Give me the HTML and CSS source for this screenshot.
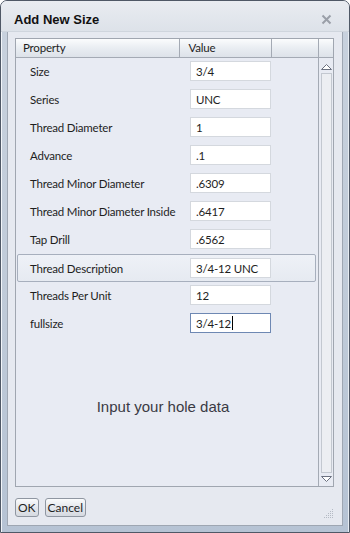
FILE: index.html
```html
<!DOCTYPE html>
<html lang="en">
<head>
    <meta charset="UTF-8">
    <meta name="viewport" content="width=device-width, initial-scale=1.0">
    <title>Add New Size</title>
    <link rel="stylesheet" href="styles.css">
</head>
<body>
    <div class="window">
        <div class="titlebar">
            <span class="title">Add New Size</span>
            <svg class="close" width="11" height="11" viewBox="0 0 11 11">
                <path d="M1.5 1.5 L9.5 9.5 M9.5 1.5 L1.5 9.5" stroke="#9a9fa8" stroke-width="2" fill="none"/>
            </svg>
        </div>

        <div class="content">
            <div class="grid">
                <div class="grid-head">
                    <div class="head-cell col-prop">Property</div>
                    <div class="head-cell col-value">Value</div>
                    <div class="head-cell col-extra"></div>
                    <div class="head-cell col-scroll"></div>
                </div>

                <div class="grid-main">
                    <div class="rows">
                        <div class="row"><span class="label">Size</span><input class="field" type="text" value="3/4"></div>
                        <div class="row"><span class="label">Series</span><input class="field" type="text" value="UNC"></div>
                        <div class="row"><span class="label">Thread Diameter</span><input class="field" type="text" value="1"></div>
                        <div class="row"><span class="label">Advance</span><input class="field" type="text" value=".1"></div>
                        <div class="row"><span class="label">Thread Minor Diameter</span><input class="field" type="text" value=".6309"></div>
                        <div class="row"><span class="label">Thread Minor Diameter Inside</span><input class="field" type="text" value=".6417"></div>
                        <div class="row"><span class="label">Tap Drill</span><input class="field" type="text" value=".6562"></div>
                        <div class="row selected"><span class="label">Thread Description</span><input class="field" type="text" value="3/4-12 UNC"></div>
                        <div class="row"><span class="label">Threads Per Unit</span><input class="field" type="text" value="12"></div>
                        <div class="row"><span class="label">fullsize</span><span class="field focused">3/4-12<span class="caret"></span></span></div>

                        <div class="hint">Input your hole data</div>
                    </div>

                    <div class="scrollbar">
                        <svg class="arrow" width="11" height="6" viewBox="0 0 11 6">
                            <path d="M0.5 5.5 L5.5 0.5 L10.5 5.5 Z" fill="#fff" stroke="#6b7180"/>
                        </svg>
                        <div class="track"></div>
                        <svg class="arrow" width="11" height="6" viewBox="0 0 11 6">
                            <path d="M0.5 0.5 L5.5 5.5 L10.5 0.5 Z" fill="#fff" stroke="#6b7180"/>
                        </svg>
                    </div>
                </div>
            </div>

            <div class="footer">
                <button class="btn">OK</button>
                <button class="btn">Cancel</button>
                <svg class="grip" width="10" height="10" viewBox="0 0 10 10">
                    <g fill="#b4bac4">
                        <rect x="8" y="0" width="1" height="1"/>
                        <rect x="6" y="2" width="1" height="1"/><rect x="8" y="2" width="1" height="1"/>
                        <rect x="4" y="4" width="1" height="1"/><rect x="6" y="4" width="1" height="1"/><rect x="8" y="4" width="1" height="1"/>
                        <rect x="2" y="6" width="1" height="1"/><rect x="4" y="6" width="1" height="1"/><rect x="6" y="6" width="1" height="1"/><rect x="8" y="6" width="1" height="1"/>
                        <rect x="0" y="8" width="1" height="1"/><rect x="2" y="8" width="1" height="1"/><rect x="4" y="8" width="1" height="1"/><rect x="6" y="8" width="1" height="1"/><rect x="8" y="8" width="1" height="1"/>
                    </g>
                </svg>
            </div>
        </div>
    </div>
</body>
</html>
```

FILE: styles.css
```css
html, body {
    margin: 0;
    padding: 0;
    background: #ffffff;
}
body {
    font-family: Lato, "Liberation Sans", Arial, sans-serif;
    font-size: 11.5px;
    letter-spacing: -0.2px;
    color: #1e1e1e;
}
.window {
    width: 350px;
    height: 533px;
    box-sizing: border-box;
    border: 1px solid #4f5866;
    border-radius: 7px 7px 0 0;
    background: linear-gradient(#c9d2de, #bfcad8 60%, #b6c3d4);
    padding: 0 6px 6px 6px;
    display: flex;
    flex-direction: column;
    box-shadow: inset 1px 1px 0 #f2f5f9, inset -1px 0 0 #e7ecf2;
}
.titlebar {
    height: 31px;
    flex: none;
    box-sizing: border-box;
    display: flex;
    align-items: center;
    justify-content: space-between;
    padding: 6px 17px 0 13px;
    margin: 0 -6px;
    background: linear-gradient(#e9ecf1, #dde2e9);
    border-radius: 6px 6px 0 0;
    border-bottom: 1px solid #cfd5dd;
}
.title {
    font-family: "Liberation Sans", Arial, sans-serif;
    font-weight: bold;
    font-size: 13px;
    letter-spacing: 0;
    color: #111;
}
.close {
    display: block;
}
.content {
    flex: 1;
    display: flex;
    flex-direction: column;
    background: #e6e9f0;
    border: 1px solid #9ea6b2;
    border-top: none;
    padding: 6px 8px 0 7px;
}
.grid {
    flex: 1;
    display: flex;
    flex-direction: column;
    border: 1px solid #a0a6b0;
    background: #e8ebf3;
}
.grid-head {
    display: flex;
    height: 18px;
    border-bottom: 1px solid #a4aab4;
    background: linear-gradient(#fbfcfd, #e9edf2 50%, #dde2e9);
}
.head-cell {
    box-sizing: border-box;
    padding-left: 7px;
    line-height: 18px;
    border-right: 1px solid #a4aab4;
    color: #1e1e1e;
}
.col-prop { width: 165px; }
.col-value { width: 92px; padding-left: 8px; }
.col-extra { width: 47px; }
.col-scroll { width: 14px; border-right: none; }
.grid-main {
    flex: 1;
    display: flex;
}
.rows {
    flex: 1;
    display: flex;
    flex-direction: column;
    margin-top: -1px;
}
.row {
    height: 28px;
    box-sizing: border-box;
    display: flex;
    align-items: center;
    padding-left: 12px;
    margin: 0 2px 0 1px;
    border: 1px solid transparent;
}
.row.selected {
    border-color: #a7afbd;
    border-radius: 2px;
    background: linear-gradient(#eef1f7, #e6eaf1);
    margin-top: 1px;
    margin-bottom: -1px;
}
.label {
    width: 160px;
    white-space: nowrap;
}
.field {
    box-sizing: border-box;
    width: 81px;
    height: 20px;
    border: 1px solid #d4d8de;
    background: #ffffff;
    font: inherit;
    letter-spacing: inherit;
    color: #1e1e1e;
    padding: 0 5px;
    margin: 0;
    outline: none;
    display: flex;
    align-items: center;
}
.field.focused {
    border-color: #6e88b3;
}
.caret {
    display: inline-block;
    width: 1px;
    height: 14px;
    background: #000;
    margin-left: 1px;
}
.hint {
    margin-top: 61px;
    text-align: center;
    font-family: "Liberation Sans", Arial, sans-serif;
    font-size: 15px;
    letter-spacing: 0;
    color: #3a3a44;
    padding-right: 8px;
}
.scrollbar {
    width: 14px;
    border-left: 1px solid #a4aab4;
    display: flex;
    flex-direction: column;
    align-items: center;
    padding: 6px 0 4px;
    gap: 3px;
}
.arrow {
    display: block;
}
.track {
    flex: 1;
    width: 9px;
    border: 1px solid #c3c8d0;
    background: #eceef2;
}
.footer {
    height: 38px;
    display: flex;
    align-items: center;
    gap: 6px;
    position: relative;
}
.btn {
    font-family: Lato, "Liberation Sans", Arial, sans-serif;
    font-size: 12px;
    color: #1e1e1e;
    height: 19px;
    padding: 0 2px;
    border: 1px solid #8f96a1;
    border-radius: 3px;
    background: linear-gradient(#fafbfc, #e4e7ec 50%, #d6dae1);
    margin-top: 3px;
}
.grip {
    position: absolute;
    right: 0;
    bottom: 6px;
}
```
